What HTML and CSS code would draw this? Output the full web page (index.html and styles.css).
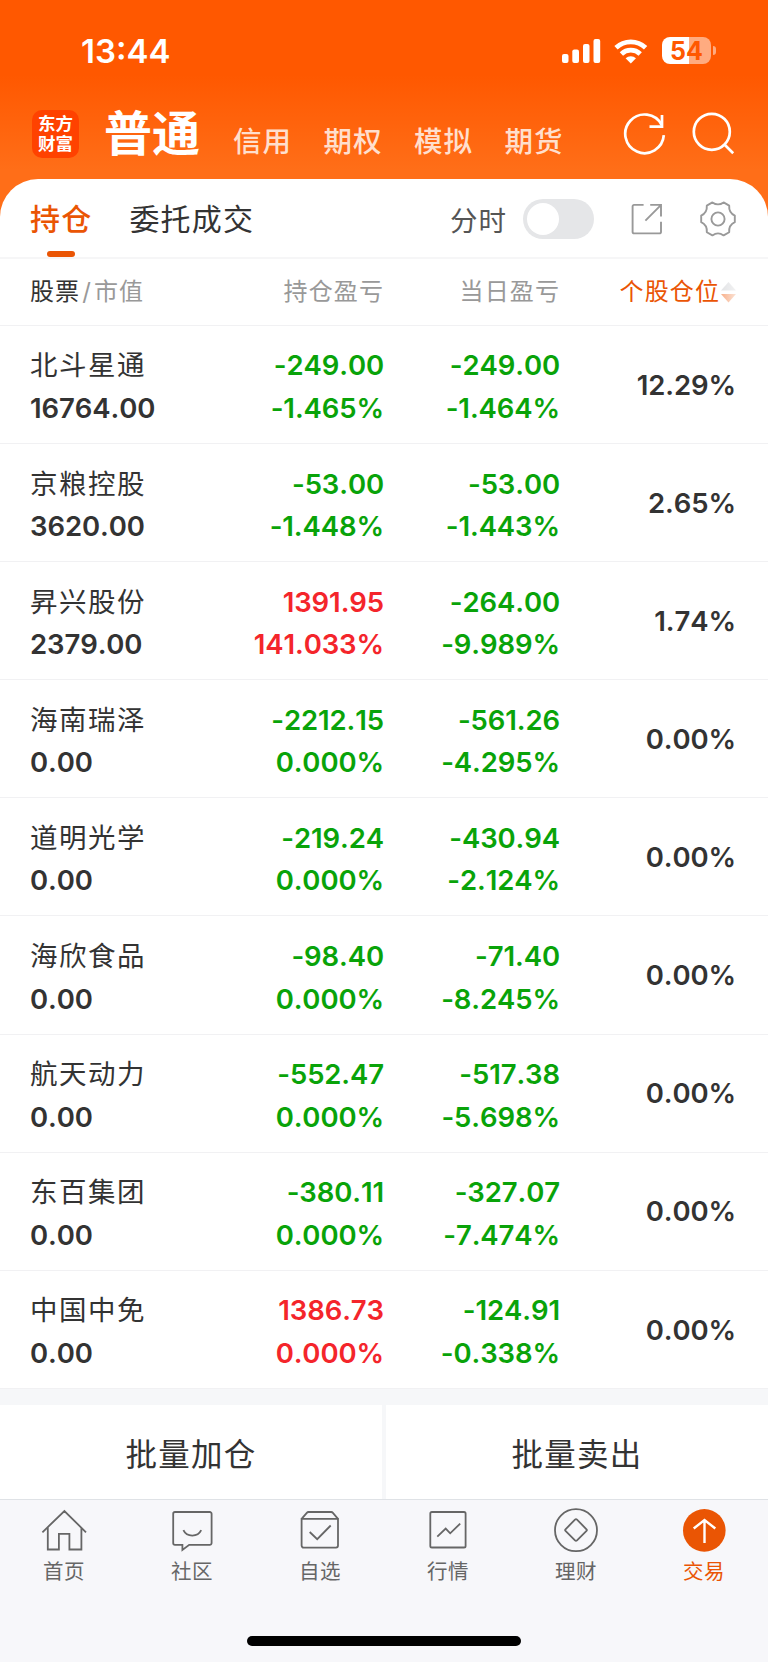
FILE: index.html
```html
<!DOCTYPE html>
<html lang="zh-CN">
<head>
    <meta charset="UTF-8">
    <title>持仓</title>
    <link rel="stylesheet" href="styles.css">
</head>
<body>
    <header class="header">
        <div class="status-bar">
            <span class="time">13:44</span>
            <div class="status-icons">
                <svg class="signal" width="39" height="25" viewBox="0 0 39 25" fill="#fff">
                    <rect x="0" y="15" width="6.5" height="9" rx="2"/>
                    <rect x="10.3" y="10.5" width="6.7" height="13.5" rx="2"/>
                    <rect x="21" y="5" width="6.5" height="19" rx="2"/>
                    <rect x="31.5" y="0" width="6.7" height="24" rx="2"/>
                </svg>
                <svg class="wifi" width="34" height="25" viewBox="0 0 34 25" fill="none" stroke="#fff" stroke-width="4.8">
                    <path d="M2 8.7a21.5 21.5 0 0 1 29.6 0"/>
                    <path d="M7.4 14.9a13.6 13.6 0 0 1 18.8 0"/>
                    <path d="M11.6 19.2a7.6 7.6 0 0 1 10.4 0L16.8 24.4z" fill="#fff" stroke="none"/>
                </svg>
                <div class="battery"><span>54</span></div>
                <i class="battery-cap"></i>
            </div>
        </div>
        <div class="nav">
            <div class="logo">东方<br>财富</div>
            <h1>普通</h1>
            <a>信用</a>
            <a>期权</a>
            <a>模拟</a>
            <a>期货</a>
            <svg class="refresh" width="44" height="44" viewBox="0 0 44 44" fill="none" stroke="#fff" stroke-width="2.7">
                <path d="M40.8 23.2A19.3 19.3 0 1 1 38.6 12.8"/>
                <path d="M39 3v11.7H26.500"/>
            </svg>
            <svg class="search" width="44" height="44" viewBox="0 0 44 44" fill="none" stroke="#fff" stroke-width="2.7">
                <circle cx="20.8" cy="19.8" r="18"/>
                <path d="M33.2 32.2l9 9"/>
            </svg>
        </div>
    </header>

    <main class="panel">
        <div class="tabs">
            <span class="tab active">持仓</span>
            <span class="tab">委托成交</span>
            <span class="switch-label">分时</span>
            <div class="switch"></div>
            <svg class="share" width="32" height="32" viewBox="0 0 32 32" fill="none" stroke="#999" stroke-width="1.9">
                <path d="M12.6 1.9H3a1.4 1.4 0 0 0-1.4 1.4V29a1.4 1.4 0 0 0 1.4 1.4h25.6a1.4 1.4 0 0 0 1.4-1.4V18.8"/>
                <path d="M19.2 1.9H30v11.5M29.6 2.3L14.4 17.6"/>
            </svg>
            <svg class="gear" width="36" height="36" viewBox="0 0 36 36" fill="none" stroke="#999" stroke-width="1.9" stroke-linejoin="round">
                <circle cx="18" cy="18" r="6.6"/>
                <path d="M12.4 1.4Q18 5.4 23.6 1.4L29.2 4.6Q28.6 11.6 34.8 14.6V21.2Q28.6 24.2 29.2 31.2L23.6 34.4Q18 30.4 12.4 34.4L6.8 31.2Q7.4 24.2 1.2 21.2V14.6Q7.4 11.6 6.8 4.6Z"/>
            </svg>
        </div>

        <div class="row head">
            <div class="stock"><b>股票</b><i>/</i>市值</div>
            <div>持仓盈亏</div>
            <div>当日盈亏</div>
            <div class="sort">个股仓位<svg width="15" height="22" viewBox="0 0 15 22">
                <defs>
                    <linearGradient id="up" x1="0" x2="1"><stop offset="0" stop-color="#e3e4e6"/><stop offset="1" stop-color="#f1f1f2"/></linearGradient>
                    <linearGradient id="down" x1="0" x2="1"><stop offset="0" stop-color="#f8b08a"/><stop offset="1" stop-color="#fbe3d6"/></linearGradient>
                </defs>
                <path d="M7.5 1L15 9.5H0z" fill="url(#up)"/>
                <path d="M7.5 21.5L15 13H0z" fill="url(#down)"/>
            </svg></div>
        </div>

        <div class="row">
            <div class="stock"><em>北斗星通</em><br>16764.00</div>
            <div class="green">-249.00<br>-1.465%</div>
            <div class="green">-249.00<br>-1.464%</div>
            <div class="ratio">12.29%</div>
        </div>
        <div class="row">
            <div class="stock"><em>京粮控股</em><br>3620.00</div>
            <div class="green">-53.00<br>-1.448%</div>
            <div class="green">-53.00<br>-1.443%</div>
            <div class="ratio">2.65%</div>
        </div>
        <div class="row">
            <div class="stock"><em>昇兴股份</em><br>2379.00</div>
            <div class="red">1391.95<br>141.033%</div>
            <div class="green">-264.00<br>-9.989%</div>
            <div class="ratio">1.74%</div>
        </div>
        <div class="row">
            <div class="stock"><em>海南瑞泽</em><br>0.00</div>
            <div class="green">-2212.15<br>0.000%</div>
            <div class="green">-561.26<br>-4.295%</div>
            <div class="ratio">0.00%</div>
        </div>
        <div class="row">
            <div class="stock"><em>道明光学</em><br>0.00</div>
            <div class="green">-219.24<br>0.000%</div>
            <div class="green">-430.94<br>-2.124%</div>
            <div class="ratio">0.00%</div>
        </div>
        <div class="row">
            <div class="stock"><em>海欣食品</em><br>0.00</div>
            <div class="green">-98.40<br>0.000%</div>
            <div class="green">-71.40<br>-8.245%</div>
            <div class="ratio">0.00%</div>
        </div>
        <div class="row">
            <div class="stock"><em>航天动力</em><br>0.00</div>
            <div class="green">-552.47<br>0.000%</div>
            <div class="green">-517.38<br>-5.698%</div>
            <div class="ratio">0.00%</div>
        </div>
        <div class="row">
            <div class="stock"><em>东百集团</em><br>0.00</div>
            <div class="green">-380.11<br>0.000%</div>
            <div class="green">-327.07<br>-7.474%</div>
            <div class="ratio">0.00%</div>
        </div>
        <div class="row">
            <div class="stock"><em>中国中免</em><br>0.00</div>
            <div class="red">1386.73<br>0.000%</div>
            <div class="green">-124.91<br>-0.338%</div>
            <div class="ratio">0.00%</div>
        </div>
    </main>

    <div class="actions">
        <div>批量加仓</div>
        <div>批量卖出</div>
    </div>

    <footer class="tabbar">
        <div class="item">
            <svg width="46" height="46" viewBox="0 0 46 46">
                <path d="M1.4 24.3L23.4 3L45 24.3M6.8 19.5V41.5H17.9V25.8H28.4V41.5H40.4V19.5"/>
            </svg>
            首页
        </div>
        <div class="item">
            <svg width="46" height="46" viewBox="0 0 46 46">
                <path d="M6 4H40.8a1.8 1.8 0 0 1 1.8 1.8V35a1.8 1.8 0 0 1-1.8 1.8H20.2L13.4 42V36.8H6A1.8 1.8 0 0 1 4.2 35V5.8A1.8 1.8 0 0 1 6 4z"/>
                <path d="M14.4 22.2c3.4 7.2 14.4 7.2 17.8 0"/>
            </svg>
            社区
        </div>
        <div class="item">
            <svg width="46" height="46" viewBox="0 0 46 46">
                <path d="M4.6 10.8H41V37.6a2 2 0 0 1-2 2H6.6a2 2 0 0 1-2-2zL9.8 4.8Q10.5 4 11.5 4H34.2Q35.2 4 35.9 4.8L41 10.8"/>
                <path d="M12.7 24l7.5 7.2 13.5-13.7"/>
            </svg>
            自选
        </div>
        <div class="item">
            <svg width="46" height="46" viewBox="0 0 46 46">
                <rect x="5.3" y="4" width="35.3" height="35.5" rx="1.6"/>
                <path d="M12.3 28.6l8.4-8 4.5 4.7 10-9.7"/>
            </svg>
            行情
        </div>
        <div class="item">
            <svg width="46" height="46" viewBox="0 0 46 46">
                <circle cx="23" cy="22.2" r="21"/>
                <path d="M22 11.6q1-1 2 0l9.5 9.7q.8.8 0 1.6l-9.5 9.5q-1 1-2 0l-9.5-9.5q-.8-.8 0-1.6z"/>
            </svg>
            理财
        </div>
        <div class="item active">
            <svg width="46" height="46" viewBox="0 0 46 46">
                <circle class="fill" cx="23.3" cy="22.4" r="21.3"/>
                <path class="arrow" d="M23.5 35V13M12.7 20.5L23.5 12L34.3 20.5"/>
            </svg>
            交易
        </div>
    </footer>
    <div class="home-bar"></div>
</body>
</html>
```

FILE: styles.css
```css
* {
    box-sizing: border-box;
}

html {
    background: #fff;
}

body {
    margin: 0;
    width: 768px;
    height: 1662px;
    overflow: hidden;
    background: #f7f7fa;
    color: #333;
    font-family: Inter, "Noto Sans CJK SC", sans-serif;
}

.header {
    height: 217px;
    background: linear-gradient(#ff5800 0, #ff5800 75px, #ff6e18 170px);
    color: #fff;
}

.status-bar {
    display: flex;
    justify-content: space-between;
    height: 100px;
    padding: 37px 52px 0 81px;
}

.time {
    font-size: 33px;
    font-weight: 600;
    line-height: 29px;
}

.status-icons {
    display: flex;
}

.signal,
.wifi {
    margin-top: 2px;
}

.wifi {
    margin-left: 13px;
}

.battery {
    width: 49px;
    height: 27px;
    margin-left: 14px;
    border-radius: 8px;
    background: linear-gradient(90deg, #fff 27px, #ffab80 27px);
    color: #ff5800;
    font-size: 25px;
    font-weight: 700;
    line-height: 28px;
    text-align: center;
}

.battery-cap {
    width: 3px;
    height: 9px;
    margin: 9px 0 0 2px;
    border-radius: 0 5px 5px 0;
    background: #ffab80;
}

.nav {
    display: flex;
    align-items: flex-start;
    height: 80px;
}

.logo {
    width: 47px;
    height: 48px;
    margin: 10px 0 0 32px;
    padding-top: 4px;
    border-radius: 10px;
    background: #ff4200;
    font-size: 17.5px;
    font-weight: 700;
    line-height: 20px;
    text-align: center;
}

.nav h1 {
    width: 100px;
    margin: 0 29px 0 25px;
    font-size: 48px;
    font-weight: 700;
    line-height: 67px;
}

.nav a {
    width: 90.5px;
    padding-top: 22px;
    color: #ffdfcd;
    font-size: 28.5px;
    font-weight: 500;
    line-height: 40px;
    letter-spacing: 1px;
}

.refresh {
    margin: 12px 0 0 28px;
}

.search {
    margin: 12px 0 0 24px;
}

.panel {
    margin-top: -38px;
    border-radius: 38px 38px 0 0;
    background: #fff;
}

.tabs {
    display: flex;
    align-items: center;
    height: 80px;
    padding: 1px 32px 0 30px;
    border-bottom: 2px solid #f6f6f7;
}

.tab {
    margin-right: 37px;
    font-size: 30px;
    line-height: 76px;
    letter-spacing: 1.2px;
}

.tab.active {
    position: relative;
    color: #ea5504;
    font-weight: 500;
}

.tab.active::after {
    content: "";
    position: absolute;
    left: 17px;
    bottom: 0;
    width: 28px;
    height: 6px;
    border-radius: 3px;
    background: #ea5504;
}

.switch-label {
    margin-left: auto;
    color: #555;
    font-size: 27.5px;
    letter-spacing: 1px;
}

.switch {
    width: 71px;
    height: 40px;
    margin-left: 16px;
    padding: 4px;
    border-radius: 20px;
    background: #e5e6e8;
}

.switch::before {
    content: "";
    display: block;
    width: 32px;
    height: 32px;
    border-radius: 50%;
    background: #fff;
}

.share {
    margin-left: 37px;
}

.gear {
    margin-left: 37px;
}

.row {
    display: grid;
    grid-template-columns: 185px 169px 176px 176px;
    align-items: center;
    height: 118.1px;
    padding: 5px 32px 0 30px;
    border-bottom: 1px solid #f1f1f3;
    font-size: 27.5px;
    font-weight: 600;
    line-height: 42.6px;
    letter-spacing: -.1px;
    font-kerning: none;
    text-align: right;
}

.row .stock {
    text-align: left;
}

.row .ratio {
    padding-bottom: 4px;
}

.row em {
    font-size: 27.5px;
    font-style: normal;
    font-weight: 400;
    letter-spacing: 1.5px;
}

.row.head {
    height: 67px;
    padding-top: 0;
    color: #999;
    font-size: 24px;
    font-weight: 400;
    letter-spacing: 1.1px;
}

.head b {
    color: #333;
    font-weight: 400;
}

.head i {
    margin: 0 2px;
    font-style: normal;
}

.head .sort {
    display: flex;
    align-items: center;
    justify-content: flex-end;
    color: #ea5504;
}

.head .sort svg {
    margin-left: 1px;
}

.green {
    color: #09a309;
}

.red {
    color: #f4252b;
}

.actions {
    display: grid;
    grid-template-columns: 1fr 1fr;
    gap: 4px;
    height: 110px;
    padding-top: 16px;
    background: #f6f7f9;
}

.actions div {
    height: 94px;
    padding-top: 3px;
    background: #fff;
    font-size: 31.5px;
    line-height: 94px;
    letter-spacing: 1.3px;
    text-align: center;
}

.tabbar {
    display: flex;
    height: 137px;
    padding-top: 8px;
    border-top: 1px solid #dfe2e6;
}

.item {
    display: flex;
    flex: 1;
    flex-direction: column;
    align-items: center;
    color: #666;
    font-size: 20.5px;
    line-height: 35px;
    letter-spacing: .6px;
}

.item svg {
    fill: none;
    stroke: #666;
    stroke-width: 1.8;
}

.item.active {
    color: #ea5504;
}

.item .fill {
    fill: #ea5504;
    stroke: none;
}

.item .arrow {
    stroke: #fff;
    stroke-width: 2.4;
}

.home-bar {
    width: 274px;
    height: 10px;
    margin: 0 auto;
    border-radius: 5px;
    background: #000;
}
```
